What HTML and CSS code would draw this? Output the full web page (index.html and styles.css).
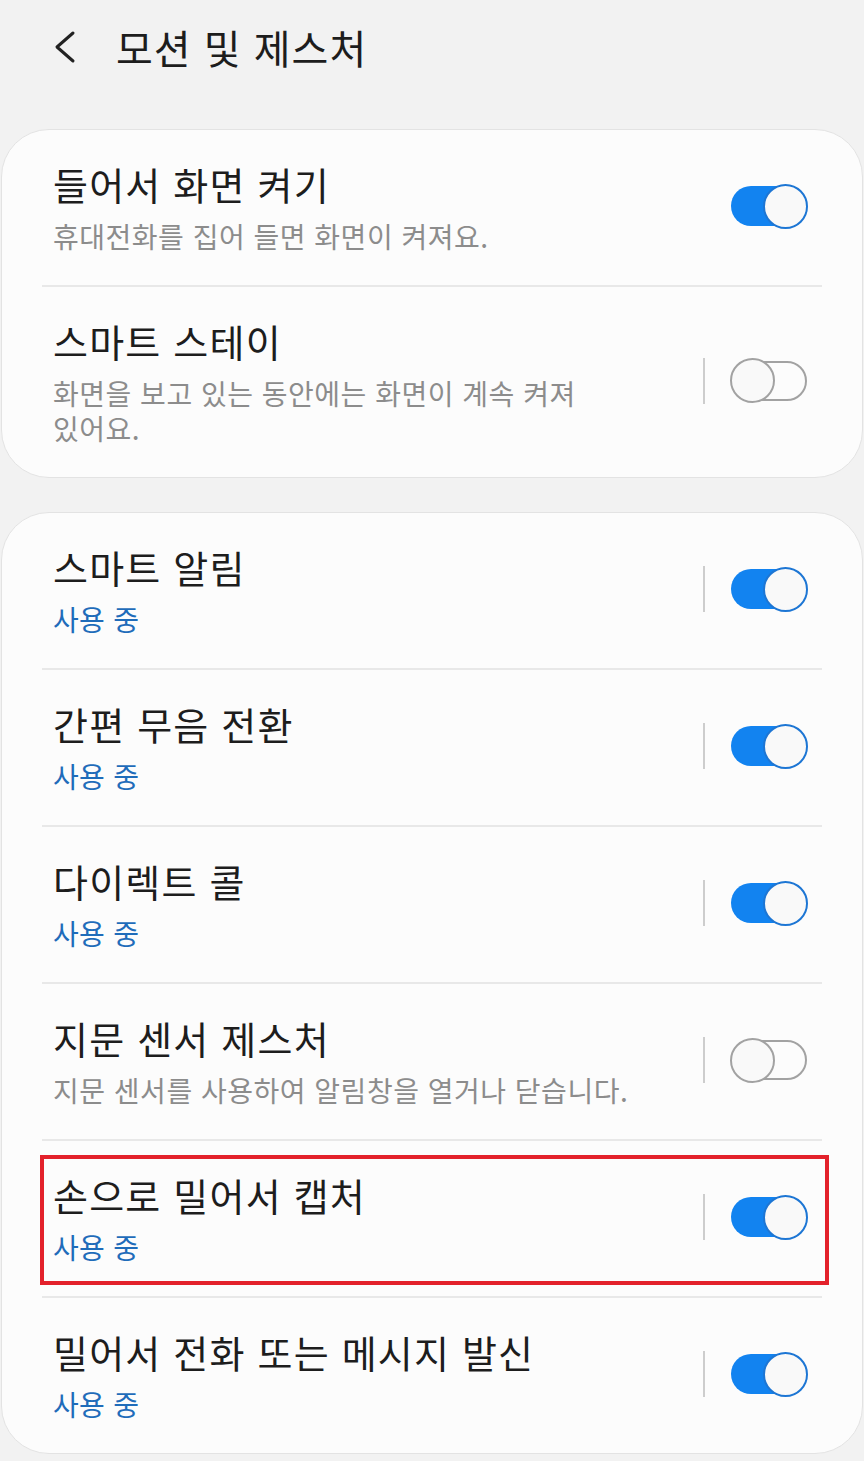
FILE: index.html
```html
<!DOCTYPE html>
<html lang="ko">
<head>
	<meta charset="UTF-8">
	<title>모션 및 제스처</title>
	<link rel="stylesheet" href="styles.css">
</head>
<body>
	<div class="wrap">
		<header class="top">
			<svg class="back" width="30" height="40" viewBox="0 0 30 40">
				<polyline points="21,6 5,20 21,34" fill="none" stroke="#222" stroke-width="3" stroke-linecap="round" stroke-linejoin="round"/>
			</svg>
			<h1>모션 및 제스처</h1>
		</header>

		<section class="card">
			<div class="row">
				<div class="txt">
					<p class="tit">들어서 화면 켜기</p>
					<p class="sub">휴대전화를 집어 들면 화면이 켜져요.</p>
				</div>
				<span class="sep hide"></span>
				<span class="switch"><i class="knob"></i></span>
			</div>
			<div class="row">
				<div class="txt">
					<p class="tit">스마트 스테이</p>
					<p class="sub">화면을 보고 있는 동안에는 화면이 계속 켜져 있어요.</p>
				</div>
				<span class="sep"></span>
				<span class="switch off"><i class="knob"></i></span>
			</div>
		</section>

		<section class="card">
			<div class="row">
				<div class="txt">
					<p class="tit">스마트 알림</p>
					<p class="sub on">사용 중</p>
				</div>
				<span class="sep"></span>
				<span class="switch"><i class="knob"></i></span>
			</div>
			<div class="row">
				<div class="txt">
					<p class="tit">간편 무음 전환</p>
					<p class="sub on">사용 중</p>
				</div>
				<span class="sep"></span>
				<span class="switch"><i class="knob"></i></span>
			</div>
			<div class="row">
				<div class="txt">
					<p class="tit">다이렉트 콜</p>
					<p class="sub on">사용 중</p>
				</div>
				<span class="sep"></span>
				<span class="switch"><i class="knob"></i></span>
			</div>
			<div class="row">
				<div class="txt">
					<p class="tit">지문 센서 제스처</p>
					<p class="sub">지문 센서를 사용하여 알림창을 열거나 닫습니다.</p>
				</div>
				<span class="sep"></span>
				<span class="switch off"><i class="knob"></i></span>
			</div>
			<div class="row mark">
				<div class="txt">
					<p class="tit">손으로 밀어서 캡처</p>
					<p class="sub on">사용 중</p>
				</div>
				<span class="sep"></span>
				<span class="switch"><i class="knob"></i></span>
			</div>
			<div class="row">
				<div class="txt">
					<p class="tit">밀어서 전화 또는 메시지 발신</p>
					<p class="sub on">사용 중</p>
				</div>
				<span class="sep"></span>
				<span class="switch"><i class="knob"></i></span>
			</div>
		</section>
	</div>
</body>
</html>
```

FILE: styles.css
```css
*{
	margin: 0;
	padding: 0;
	box-sizing: border-box;
}
body{
	background: #f2f2f2;
	font-family: "Noto Sans CJK KR", "Noto Sans", sans-serif;
	color: #1d1d1d;
}
.wrap{width:864px;overflow: hidden;padding-bottom: 10px;}

.top{
	height: 94px;
	display: flex;
	align-items: center;
	padding-left: 52px;
}
.top .back{margin-right: 34px;}
.top h1{
	font-size: 40px;
	font-weight: 400;
	letter-spacing: 1px;
	line-height: 50px;
}

.card{
	margin: 34px 1px 0;
	background: #fcfcfc;
	border: 1px solid #e3e3e3;
	border-radius: 48px;
	padding: 0 40px;
}
.top + .card{margin-top: 35px;}
.row{
	position: relative;
	display: flex;
	align-items: center;
	padding: 28px 15px 31px 11px;
	border-bottom: 2px solid #e8e8e8;
}
.row:last-child{border-bottom: 0;}
.txt{
	flex: 1;
	margin-right: 43px;
	word-break: keep-all;
}
.tit{
	font-size: 38px;
	letter-spacing: 1.2px;
	line-height: 52px;
}
.sub{
	margin-top: 9px;
	font-size: 28px;
	letter-spacing: 0.5px;
	line-height: 35px;
	color: #8c8c8c;
}
.sub.on{color: #1f6cba;letter-spacing: 0.3px;}

.sep{
	width: 2px;
	height: 46px;
	background: #cdcdcd;
	margin-right: 26px;
	flex: none;
}
.sep.hide{visibility: hidden;}

.switch{
	flex: none;
	width: 76px;
	height: 40px;
	border-radius: 20px;
	background: #1283f0;
	display: flex;
	align-items: center;
	justify-content: flex-end;
}
.knob{
	width: 45px;
	height: 45px;
	margin-right: -1px;
	border: 2px solid #1d76d4;
	border-radius: 50%;
	background: #f9f9f9;
}
.switch.off{
	background: transparent;
	border: 2px solid #a2a2a2;
	justify-content: flex-start;
}
.switch.off .knob{
	margin: 0 0 0 -3px;
	border-color: #a2a2a2;
}

/* 표시 박스 */
.mark::after{
	content: "";
	position: absolute;
	top: 14px;
	left: -2px;
	right: -7px;
	bottom: 11px;
	border: 4px solid #e3212b;
}
```
